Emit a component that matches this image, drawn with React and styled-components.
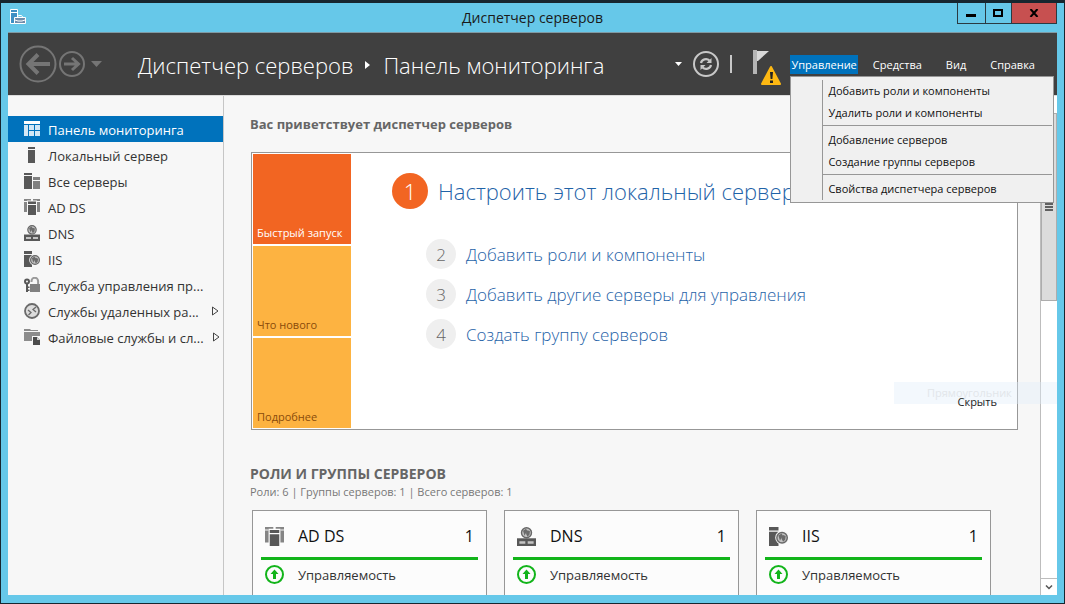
import React from 'react';
import styled, { createGlobalStyle, css } from 'styled-components';

const Global = createGlobalStyle`
  * { box-sizing: border-box; }
  body { margin: 0; font-family: 'Open Sans', 'Noto Sans', sans-serif; font-size: 13px; color: #333; }
  button { font: inherit; color: inherit; border: 0; padding: 0; background: none; }
  a { text-decoration: none; color: inherit; }
  h1, h2, p, ul, ol { margin: 0; padding: 0; font-weight: 400; }
  ul, ol { list-style: none; }
  svg { display: block; flex: none; }
`;

const Desktop = styled.div`
  height: 100vh;
  padding: 3px 1px 1px;
  background: #17262f;
`;

const Window = styled.div`
  display: flex;
  flex-direction: column;
  height: 100%;
  padding: 0 7px 8px;
  background: #66c8e9;
`;

const TitleBar = styled.div`
  display: grid;
  grid-template-columns: 100px 1fr 100px;
  height: 30px;
  flex: none;
  border-bottom: 1px solid #7f9aa4;
`;

const AppIcon = styled.div`
  padding: 6px 2px;
`;

const WindowTitle = styled.h1`
  font-size: 14px;
  line-height: 30px;
  text-align: center;
  color: #1a1a1a;
`;

const WindowButtons = styled.div`
  display: flex;
  height: 21px;
  border: 1px solid #2a3a42;
  border-top: 0;
`;

const WindowButton = styled.button`
  display: flex;
  align-items: center;
  justify-content: center;
  flex: ${(p) => p.$grow || 1} 1 0;
  background: ${(p) => (p.$close ? '#c75050' : 'transparent')};
  & + & { border-left: 1px solid #2a3a42; }
`;

const Header = styled.header`
  display: flex;
  align-items: center;
  height: 62px;
  flex: none;
  padding: 0 10px 0 11px;
  background: #404040;
`;

const NavButtons = styled.div`
  display: flex;
  align-items: center;
  gap: 2px;
  width: 119px;
`;

const Breadcrumb = styled.nav`
  display: flex;
  align-items: center;
  flex: 1;
  gap: 12px;
  padding-top: 2px;
  font-size: 22px;
  font-weight: 300;
  line-height: 32px;
  color: #fff;
  white-space: nowrap;
`;

const HeaderTools = styled.div`
  display: flex;
  align-items: center;
  gap: 11px;
  margin-right: 9px;
`;

const Divider = styled.span`
  width: 2px;
  height: 18px;
  background: #c8c8c8;
`;

const MenuBar = styled.div`
  position: relative;
  display: flex;
`;

const MenuButton = styled.button`
  padding: 1px 12px 0;
  font-size: 11px;
  line-height: 18px;
  color: #fff;
  ${(p) => p.$open && css`
    margin-right: 3px;
    padding: 1px 1px 0;
    background: #0072bc;
  `}
`;

const Menu = styled.div`
  position: absolute;
  top: 21px;
  left: 0;
  z-index: 2;
  width: 264px;
  padding: 3px 1px 2px 31px;
  border: 1px solid #979797;
  background: #f0f0f0;
`;

const MenuGroups = styled.div`
  border-left: 1px solid #979797;
`;

const MenuGroup = styled.div`
  display: flex;
  flex-direction: column;
  padding: 0 0 1px;
  & + & { border-top: 1px solid #979797; padding-top: 3px; }
  &:last-child { padding-bottom: 0; }
`;

const MenuItem = styled.button`
  padding: 0 5px;
  font-size: 11px;
  line-height: 22px;
  text-align: left;
  color: #111;
  white-space: nowrap;
`;

const Body = styled.div`
  display: flex;
  flex: 1;
  min-height: 0;
  background: #f7f7f7;
  border-top: 1px solid #dcdcdc;
`;

const Sidebar = styled.nav`
  width: 216px;
  flex: none;
  padding-top: 20px;
  border-right: 1px solid #c6c6c6;
`;

const SideLink = styled.a`
  display: flex;
  align-items: center;
  gap: 8px;
  height: 26px;
  padding: 0 4px 0 16px;
  font-size: 13px;
  color: ${(p) => (p.$active ? '#fff' : '#333')};
  background: ${(p) => (p.$active ? '#0072bc' : 'transparent')};
`;

const SideLabel = styled.span`
  flex: 1;
  padding-top: 2px;
  white-space: nowrap;
`;

const Main = styled.main`
  flex: 1;
  min-width: 0;
  overflow-x: visible;
  overflow-y: clip;
  padding: 18px 22px 0 26px;
`;

const SectionTitle = styled.h2`
  font-size: ${(p) => (p.$large ? 14 : 13)}px;
  font-weight: 700;
  line-height: 20px;
  color: #666;
`;

const WelcomeCard = styled.section`
  display: flex;
  margin: 18px 0 34px 1px;
  border: 1px solid #979797;
  padding: 1px;
  background: #fff;
`;

const Tiles = styled.div`
  display: flex;
  flex-direction: column;
  gap: 2px;
  width: 98px;
`;

const Tile = styled.button`
  display: flex;
  align-items: flex-end;
  height: 90px;
  padding: 0 4px 3px;
  font-size: 11px;
  line-height: 16px;
  white-space: nowrap;
  color: ${(p) => (p.$active ? '#fff' : '#8a4b0a')};
  background: ${(p) => (p.$active ? '#f26522' : '#fdb341')};
`;

const Steps = styled.ol`
  flex: 1;
  padding: 19px 0 0 41px;
`;

const Step = styled.li`
  display: flex;
  align-items: center;
  gap: 10px;
  height: 40px;
  padding-left: 34px;
  font-size: 17px;
  ${(p) => p.$primary && css`
    height: 36px;
    margin-bottom: 25px;
    padding-left: 0;
    font-size: 22px;
  `}
`;

const StepNumber = styled.span`
  display: flex;
  align-items: center;
  justify-content: center;
  width: ${(p) => (p.$primary ? 36 : 30)}px;
  height: ${(p) => (p.$primary ? 36 : 30)}px;
  border-radius: 50%;
  font-weight: 300;
  color: ${(p) => (p.$primary ? '#fff' : '#666')};
  background: ${(p) => (p.$primary ? '#f26522' : '#efefef')};
`;

const StepLink = styled.a`
  font-weight: 300;
  color: #1f63a8;
  white-space: nowrap;
`;

const CardFooter = styled.div`
  position: relative;
  align-self: flex-end;
  padding: 0 19px 18px 0;
`;

const HideButton = styled.button`
  position: relative;
  font-size: 11px;
  line-height: 16px;
  color: #222;
`;

const Ghost = styled.span`
  position: absolute;
  right: -41px;
  bottom: 24px;
  width: 163px;
  height: 22px;
  padding-left: 33px;
  font-size: 11px;
  line-height: 22px;
  color: #e2e6ea;
  background: rgba(225, 238, 250, 0.4);
`;

const RolesSummary = styled.p`
  font-size: 11px;
  line-height: 16px;
  color: #777;
`;

const RoleGrid = styled.div`
  display: grid;
  grid-template-columns: repeat(auto-fill, 235px);
  gap: 17px;
  margin: 10px 0 0 2px;
`;

const RoleCard = styled.section`
  height: 230px;
  padding: 8px;
  border: 1px solid #979797;
  background: #fcfcfc;
`;

const RoleHead = styled.div`
  display: flex;
  align-items: center;
  gap: 14px;
  height: 38px;
  padding: 0 4px 4px;
  font-size: 16px;
  color: #111;
`;

const RoleName = styled.span`
  flex: 1;
`;

const RoleRow = styled.a`
  display: flex;
  align-items: center;
  gap: 14px;
  height: 32px;
  padding: 0 4px;
  border-top: 3px solid #12b41a;
  font-size: 13px;
`;

const ScrollBar = styled.div`
  display: flex;
  flex-direction: column;
  width: 17px;
  flex: none;
  border-left: 1px solid #bdbdbd;
  background: #fff;
`;

const ScrollArrow = styled.button`
  display: flex;
  align-items: center;
  justify-content: center;
  height: 17px;
  ${(p) => p.$down && css`
    margin-top: auto;
    border-top: 1px solid #bdbdbd;
  `}
`;

const ScrollThumb = styled.div`
  display: flex;
  align-items: center;
  justify-content: center;
  height: 188px;
  border: 1px solid #adadad;
  background: #dcdcdc;
`;

const Globe = ({ x, y, r }) => (
  <g>
    <circle cx={x} cy={y} r={r} fill="#c4c4c4" stroke="#686868" strokeWidth="1.200" />
    <path
      d={`M${x - r * 0.7} ${y - r * 0.4} l${r * 0.6} ${-r * 0.4} l${r * 0.3} ${r * 0.5} l${-r * 0.4} ${r * 0.5} l${-r * 0.2} ${r * 0.4} z M${x + r * 0.2} ${y - r * 0.5} l${r * 0.5} ${r * 0.2} l${-r * 0.1} ${r * 0.7} l${-r * 0.4} ${r * 0.4} l${-r * 0.3} ${-r * 0.6} z`}
      fill="#6c6c6c"
    />
  </g>
);

const iconShapes = {
  dashboard: (
    <g fill="#d3e7f5">
      <path d="M0 0h16v3H0z" fill="#fff" />
      <path d="M0 4h4v11H0zM5 4h5v5H5zM11 4h5v5h-5zM5 10h5v5H5zM11 10h5v5h-5z" />
    </g>
  ),
  server: <path d="M4 0h7v2H4zM4 3h7v13H4z" fill="#585858" />,
  servers: (
    <g>
      <path d="M0 0h8v2H0zM0 3h8v13H0z" fill="#585858" />
      <path d="M9 4h7v3H9zM9 8h7v8H9z" fill="#808080" />
    </g>
  ),
  adds: (
    <g>
      <path d="M0 0h7v1.500H3V13H0zM16 0H9v1.500h4V13h3z" fill="#858585" />
      <path d="M0 2h3v1H0zM13 2h3v1h-3z" fill="#f7f7f7" />
      <path d="M4 2.500h8V5H4zM4 6h8v10H4z" fill="#585858" />
    </g>
  ),
  dns: (
    <g>
      <Globe x={8} y={4.8} r={4.2} />
      <path d="M0 9.500h16V16H0z" fill="#585858" />
      <path d="M2 12h5v2H2zM9 12h5v2H9z" fill="#c4c4c4" />
    </g>
  ),
  iis: (
    <g>
      <path d="M0 0h8v3H0zM0 4h8v12H0z" fill="#585858" />
      <circle cx="11" cy="9" r="5.800" fill="#f7f7f7" />
      <Globe x={11} y={9} r={4.4} />
    </g>
  ),
  lock: (
    <g>
      <path d="M6 7h10v8H6z" fill="#808080" />
      <path d="M7.500 5V4a3.300 3.300 0 0 1 6.600 0v3" fill="none" stroke="#9a9a9a" strokeWidth="2" />
      <circle cx="3" cy="4.500" r="2" fill="none" stroke="#585858" strokeWidth="2" />
      <path d="M2 7h2v8H2zM4 9.500h1.500V11H4zM4 12.500h1.500V14H4z" fill="#585858" />
    </g>
  ),
  remote: (
    <g fill="none" stroke="#6a6a6a">
      <circle cx="8" cy="8" r="7" strokeWidth="1.800" fill="#dcdcdc" />
      <path d="M4 7l3 2.500L4.500 12M12 4L9 6.500 12 9" strokeWidth="1.300" />
    </g>
  ),
  files: (
    <g>
      <path d="M0 0h6l1 1h7v1H0zM0 3h16v4H8v5H0z" fill="#8c8c8c" />
      <path d="M9 8h4l3 3v5H9z" fill="#4c4c4c" />
      <path d="M13 8v3h3z" fill="#d0d0d0" />
    </g>
  ),
};

const Icon = ({ name, size = 16 }) => (
  <svg width={size} height={size} viewBox="0 0 16 16" aria-hidden="true">{iconShapes[name]}</svg>
);

const sideItems = [
  ['dashboard', 'Панель мониторинга'],
  ['server', 'Локальный сервер'],
  ['servers', 'Все серверы'],
  ['adds', 'AD DS'],
  ['dns', 'DNS'],
  ['iis', 'IIS'],
  ['lock', 'Служба управления пр...'],
  ['remote', 'Службы удаленных ра...', true],
  ['files', 'Файловые службы и сл...', true],
];

const menuGroups = [
  ['Добавить роли и компоненты', 'Удалить роли и компоненты'],
  ['Добавление серверов', 'Создание группы серверов'],
  ['Свойства диспетчера серверов'],
];

const steps = [
  'Настроить этот локальный сервер',
  'Добавить роли и компоненты',
  'Добавить другие серверы для управления',
  'Создать группу серверов',
];

const roles = [['adds', 'AD DS'], ['dns', 'DNS'], ['iis', 'IIS']];

export default function App() {
  return (
    <Desktop>
      <Global />
      <Window>
        <TitleBar>
          <AppIcon>
            <svg width="16" height="16" viewBox="0 0 16 16">
              <path d="M.5.500h7v14h-7z" fill="#3d8fc4" stroke="#fff" />
              <path d="M1 3.500h6" stroke="#fff" />
              <path d="M4.500 8.500h11v6h-11z" fill="#6f8cab" stroke="#fff" />
              <path d="M7 8.500l1.500-2h3l1.500 2M5 11l3 1h4l3-1" fill="none" stroke="#fff" />
            </svg>
          </AppIcon>
          <WindowTitle>Диспетчер серверов</WindowTitle>
          <WindowButtons>
            <WindowButton $grow={28} aria-label="Свернуть">
              <svg width="10" height="10"><path d="M0 6h10v3H0z" fill="#000" /></svg>
            </WindowButton>
            <WindowButton $grow={26} aria-label="Развернуть">
              <svg width="10" height="8"><path d="M1 1h8v6H1z" fill="none" stroke="#000" strokeWidth="2" /></svg>
            </WindowButton>
            <WindowButton $grow={46} $close aria-label="Закрыть">
              <svg width="10" height="8"><path d="M1.500 0l7 8M8.500 0l-7 8" stroke="#000" strokeWidth="2" /></svg>
            </WindowButton>
          </WindowButtons>
        </TitleBar>

        <Header>
          <NavButtons>
            <button aria-label="Назад">
              <svg width="38" height="38" viewBox="0 0 38 38" fill="none" stroke="#757575">
                <circle cx="19" cy="19" r="17.500" strokeWidth="2" />
                <path d="M31 19H10M19 9.500L9.500 19l9.500 9.500" strokeWidth="4" />
              </svg>
            </button>
            <button aria-label="Вперед">
              <svg width="26" height="26" viewBox="0 0 26 26" fill="none" stroke="#757575">
                <circle cx="13" cy="13" r="12" strokeWidth="2" />
                <path d="M5 13h14M13 7l6.500 6-6.500 6" strokeWidth="3" />
              </svg>
            </button>
            <button aria-label="Журнал">
              <svg width="18" height="6"><path d="M4 0h11L9.500 6z" fill="#757575" /></svg>
            </button>
          </NavButtons>
          <Breadcrumb>
            <span>Диспетчер серверов</span>
            <svg width="6" height="8"><path d="M0 0l5 4-5 4z" fill="#fff" /></svg>
            <span>Панель мониторинга</span>
          </Breadcrumb>
          <HeaderTools>
            <svg width="7" height="4"><path d="M0 0h7L3.500 4z" fill="#fff" /></svg>
            <button aria-label="Обновить">
              <svg width="26" height="26" viewBox="0 0 26 26" fill="none" stroke="#c8c8c8">
                <circle cx="13" cy="13" r="12" strokeWidth="2" />
                <path d="M8 12a5 4.500 0 0 1 8.500-2.500M18 14a5 4.500 0 0 1-8.500 2.500" strokeWidth="2.200" />
                <path d="M18.500 7v5h-5zM7.500 19v-5h5z" fill="#c8c8c8" stroke="none" />
              </svg>
            </button>
            <Divider />
            <button aria-label="Уведомления">
              <svg width="38" height="42" viewBox="0 0 38 42">
                <path d="M10 7h4v24h-4z" fill="#b5b5b5" />
                <path d="M14 8h12L15 18h-1z" fill="#d9d9d9" />
                <path d="M28 24l9 17H19z" fill="#fdb813" stroke="#fdb813" strokeWidth="2" strokeLinejoin="round" />
                <path d="M27 29h3l-.6 7h-1.800zM27 37.500h3V40h-3z" fill="#222" />
              </svg>
            </button>
          </HeaderTools>
          <MenuBar>
            <MenuButton $open aria-expanded="true">Управление</MenuButton>
            <MenuButton>Средства</MenuButton>
            <MenuButton>Вид</MenuButton>
            <MenuButton>Справка</MenuButton>
            <Menu role="menu">
              <MenuGroups>
                {menuGroups.map((group) => (
                  <MenuGroup key={group[0]}>
                    {group.map((label) => <MenuItem key={label} role="menuitem">{label}</MenuItem>)}
                  </MenuGroup>
                ))}
              </MenuGroups>
            </Menu>
          </MenuBar>
        </Header>

        <Body>
          <Sidebar>
            {sideItems.map(([icon, label, more], i) => (
              <SideLink key={label} href="#" $active={i === 0}>
                <Icon name={icon} />
                <SideLabel>{label}</SideLabel>
                {more && <svg width="8" height="10"><path d="M1.500 1v8L7 5z" fill="none" stroke="#444" /></svg>}
              </SideLink>
            ))}
          </Sidebar>
          <Main>
            <SectionTitle>Вас приветствует диспетчер серверов</SectionTitle>
            <WelcomeCard>
              <Tiles>
                <Tile $active>Быстрый запуск</Tile>
                <Tile>Что нового</Tile>
                <Tile>Подробнее</Tile>
              </Tiles>
              <Steps>
                {steps.map((label, i) => (
                  <Step key={label} $primary={i === 0}>
                    <StepNumber $primary={i === 0}>{i + 1}</StepNumber>
                    <StepLink href="#">{label}</StepLink>
                  </Step>
                ))}
              </Steps>
              <CardFooter>
                <Ghost>Прямоугольник</Ghost>
                <HideButton>Скрыть</HideButton>
              </CardFooter>
            </WelcomeCard>
            <SectionTitle $large>РОЛИ И ГРУППЫ СЕРВЕРОВ</SectionTitle>
            <RolesSummary>Роли: 6 | Группы серверов: 1 | Всего серверов: 1</RolesSummary>
            <RoleGrid>
              {roles.map(([icon, name]) => (
                <RoleCard key={name}>
                  <RoleHead>
                    <Icon name={icon} size={19} />
                    <RoleName>{name}</RoleName>
                    <span>1</span>
                  </RoleHead>
                  <RoleRow href="#">
                    <svg width="19" height="19" viewBox="0 0 19 19">
                      <circle cx="9.500" cy="9.500" r="8.500" fill="none" stroke="#12b41a" strokeWidth="2" />
                      <path d="M9.500 4.500l4 4.500h-2.500v5H8V9H5.500z" fill="#12b41a" />
                    </svg>
                    <span>Управляемость</span>
                  </RoleRow>
                </RoleCard>
              ))}
            </RoleGrid>
          </Main>
          <ScrollBar>
            <ScrollArrow aria-label="Вверх">
              <svg width="8" height="5"><path d="M1 4.500l3-3 3 3" fill="none" stroke="#555" strokeWidth="1.500" /></svg>
            </ScrollArrow>
            <ScrollThumb>
              <svg width="8" height="8"><path d="M0 1h8M0 4h8M0 7h8" stroke="#606060" strokeWidth="2" /></svg>
            </ScrollThumb>
            <ScrollArrow $down aria-label="Вниз">
              <svg width="8" height="5"><path d="M1 .5l3 3 3-3" fill="none" stroke="#555" strokeWidth="1.500" /></svg>
            </ScrollArrow>
          </ScrollBar>
        </Body>
      </Window>
    </Desktop>
  );
}
